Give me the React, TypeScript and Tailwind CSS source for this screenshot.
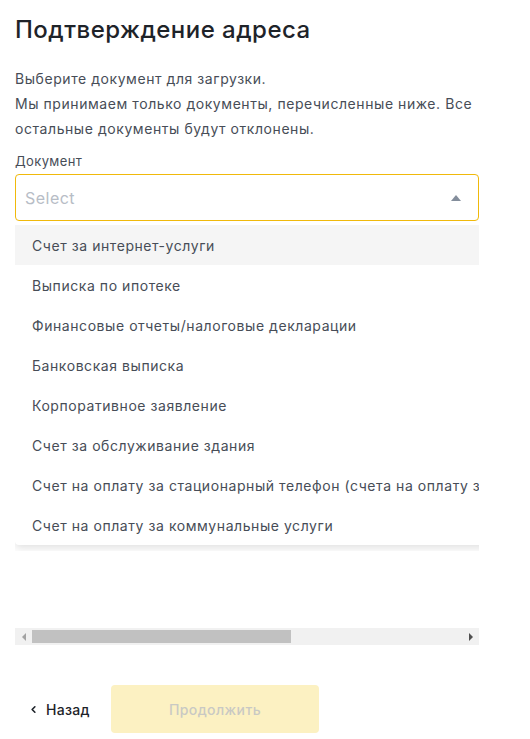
import { ChevronLeft } from "lucide-react"

const documents = [
	"Счет за интернет-услуги",
	"Выписка по ипотеке",
	"Финансовые отчеты/налоговые декларации",
	"Банковская выписка",
	"Корпоративное заявление",
	"Счет за обслуживание здания",
	"Счет на оплату за стационарный телефон (счета на оплату за мобильный телефон не принимаются)",
	"Счет на оплату за коммунальные услуги",
]

function Scrollbar() {
	return (
		<div className="mt-[83px] flex h-[17px] items-center bg-[#f1f1f1]">
			<div className="flex w-[17px] justify-center">
				<div className="h-0 w-0 border-y-[4px] border-r-[4px] border-y-transparent border-r-[#a3a3a3]" />
			</div>
			<div className="h-[13px] w-[259px] bg-[#c1c1c1]" />
			<div className="flex-1" />
			<div className="flex w-[17px] justify-center">
				<div className="h-0 w-0 border-y-[4px] border-l-[4px] border-y-transparent border-l-[#505050]" />
			</div>
		</div>
	)
}

export default function App() {
	return (
		<div
			className="min-h-[739px] bg-white pl-[15px] pt-[14px]"
			style={{ fontFamily: "Inter, 'Noto Sans', sans-serif" }}
		>
			<div className="w-[464px]">
				<h1 className="text-[24px] leading-[32px] font-medium tracking-[0.02em] text-[#1e2329]">
					Подтверждение адреса
				</h1>
				<p className="mt-[20px] text-[14px] leading-[25px] tracking-[0.04em] text-[#474d57]">
					Выберите документ для загрузки.
					<br />
					Мы принимаем только документы, перечисленные ниже. Все остальные документы будут отклонены.
				</p>
				<div className="mt-[12px] text-[13px] leading-[16px] tracking-[0.03em] text-[#474d57]">Документ</div>
				<div className="mt-[5px] flex h-[47px] items-center justify-between rounded-[4px] border border-[#f0b90b] pl-[9px] pr-[17px]">
					<span className="text-[16px] tracking-[0.03em] text-[#b7bdc6]">Select</span>
					<div className="h-0 w-0 border-x-[5px] border-b-[6px] border-x-transparent border-b-[#848e9c]" />
				</div>
				<div className="relative mt-[4px] overflow-hidden pb-[6px]">
					<div className="w-[770px] rounded-b-[4px] bg-white shadow-[0_3px_8px_rgba(0,0,0,0.12)]">
						{documents.map((doc, i) => (
							<div
								key={doc}
								className={`flex h-[40px] items-center whitespace-nowrap pl-[17px] text-[14px] tracking-[0.04em] text-[#474d57] ${
									i === 0 ? "bg-[#f5f5f5]" : ""
								}`}
							>
								{doc}
							</div>
						))}
					</div>
				</div>
				<div className="-mt-[6px]">
					<Scrollbar />
				</div>
			</div>
			<div className="mt-[40px] flex items-center">
				<button className="flex h-[48px] w-[96px] items-center gap-[7px] pl-[13px] text-[14px] font-medium tracking-[0.02em] text-[#1e2329]">
					<ChevronLeft size={11} strokeWidth={3.5} />
					Назад
				</button>
				<button className="h-[48px] w-[208px] rounded-[4px] bg-[#fcf1c2] text-[14px] font-medium tracking-[0.03em] text-[#c9c9c4]">
					Продолжить
				</button>
			</div>
		</div>
	)
}
